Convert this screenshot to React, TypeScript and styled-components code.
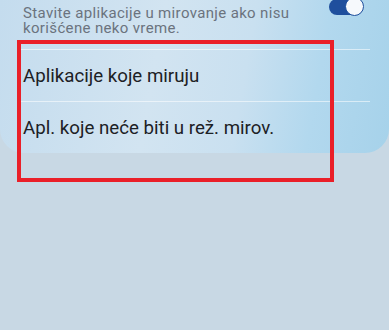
import React from "react";
import styled, { createGlobalStyle } from "styled-components";

const GlobalStyle = createGlobalStyle`
  html, body {
    margin: 0;
    padding: 0;
    background: #c8d8e4;
    font-family: Roboto, "Noto Sans", "Liberation Sans", sans-serif;
  }
  #root {
    height: 330px;
    overflow: hidden;
    position: relative;
  }
`;

const Card = styled.div`
  background: linear-gradient(
    100deg,
    #c4dcee 0%,
    #d2e4f1 40%,
    #c9e0f0 62%,
    #b2d8ee 80%,
    #a6d2ea 100%
  );
  border-radius: 0 0 24px 24px;
  padding: 0 19px 0 18px;
`;

const Header = styled.div`
  display: flex;
  justify-content: space-between;
  align-items: flex-start;
  padding: 6px 0 13px 5px;
`;

const Subtitle = styled.div`
  font-size: 15px;
  line-height: 15px;
  letter-spacing: 0.35px;
  color: #6b737e;
  width: 280px;
`;

const Toggle = styled.div<{ on: boolean }>`
  position: relative;
  width: 34px;
  height: 16px;
  margin: -7px 7px 0 0;
  border-radius: 8px;
  background: ${(p) => (p.on ? "#1f4f9d" : "#9aa4ad")};
`;

const Thumb = styled.span`
  position: absolute;
  right: -1px;
  top: -2px;
  width: 17px;
  height: 17px;
  border-radius: 50%;
  background: #f6f9fc;
  border: 1.5px solid #1f4f9d;
`;

const Row = styled.div`
  display: flex;
  align-items: center;
  height: 51px;
  padding-left: 5px;
  border-top: 1px solid rgba(255, 255, 255, 0.55);
  font-size: 18.7px;
  color: #1d2125;
`;

const Highlight = styled.div`
  position: absolute;
  left: 17px;
  top: 40px;
  width: 317px;
  height: 142px;
  box-sizing: border-box;
  border: 4px solid #ea1f28;
  pointer-events: none;
`;

const items = ["Aplikacije koje miruju", "Apl. koje neće biti u rež. mirov."];

const App = () => {
  return (
    <>
      <GlobalStyle />
      <Card>
        <Header>
          <Subtitle>Stavite aplikacije u mirovanje ako nisu korišćene neko vreme.</Subtitle>
          <Toggle on>
            <Thumb />
          </Toggle>
        </Header>
        {items.map((item) => (
          <Row key={item}>{item}</Row>
        ))}
      </Card>
      <Highlight />
    </>
  );
};

export default App;
